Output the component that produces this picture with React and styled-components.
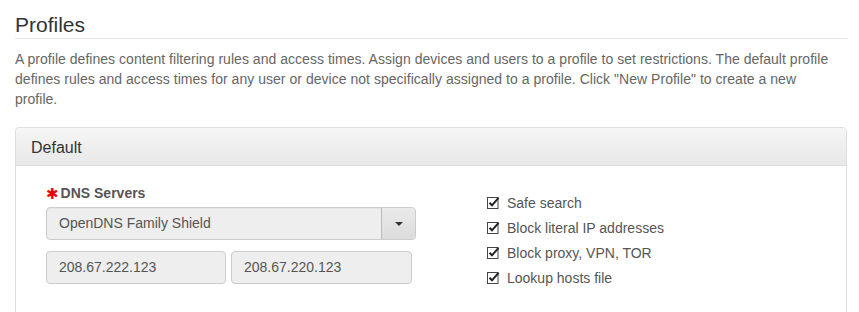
import styled, { createGlobalStyle } from "styled-components";

const Global = createGlobalStyle`
  body {
    margin: 0;
    background: #fff;
    font-family: "Liberation Sans", Arial, sans-serif;
  }
`;

const Page = styled.div`
  height: 312px;
  overflow: hidden;
  padding: 0 12px 0 15px;
`;

const Title = styled.h1`
  margin: 13px 0 0;
  padding-bottom: 1px;
  font-size: 21px;
  line-height: 24px;
  font-weight: normal;
  color: #333;
  border-bottom: 1px solid #e5e5e5;
`;

const Intro = styled.p`
  margin: 10px 0 18px;
  font-size: 14px;
  line-height: 20px;
  letter-spacing: 0.03px;
  color: #666;
`;

const Panel = styled.div`
  border: 1px solid #ddd;
  border-radius: 4px;
  height: 220px;
`;

const PanelHead = styled.div`
  height: 28px;
  padding: 9px 15px 0;
  font-size: 16px;
  line-height: 22px;
  color: #333;
  background: linear-gradient(#f5f5f5, #e8e8e8);
  border-bottom: 1px solid #ddd;
  border-radius: 3px 3px 0 0;
`;

const PanelBody = styled.div`
  display: grid;
  grid-template-columns: 370px 1fr;
  column-gap: 71px;
  padding: 17px 30px 0;
`;

const Field = styled.div`
  display: flex;
  flex-direction: column;
`;

const Label = styled.label`
  display: flex;
  align-items: center;
  gap: 2px;
  margin-bottom: 4px;
  font-size: 14px;
  line-height: 20px;
  font-weight: bold;
  color: #555;
`;

const Star = styled.span`
  color: #e00;
  font-family: "DejaVu Sans", sans-serif;
  font-size: 15px;
  line-height: 20px;
  position: relative;
  top: 1px;
`;

const Select = styled.div`
  display: flex;
  height: 31px;
  border: 1px solid #ccc;
  border-radius: 4px;
  background: #eee;
  box-shadow: inset 0 1px 1px rgba(0, 0, 0, 0.04);
`;

const SelectValue = styled.div`
  flex: 1;
  padding: 0 12px;
  font-size: 14px;
  line-height: 31px;
  color: #555;
`;

const Caret = styled.div`
  width: 33px;
  display: flex;
  align-items: center;
  justify-content: center;
  border-left: 1px solid #bbb;
  border-radius: 0 3px 3px 0;
  background: linear-gradient(#eaeaea, #dcdcdc);

  &::after {
    content: "";
    border-top: 4px solid #333;
    border-left: 4px solid transparent;
    border-right: 4px solid transparent;
  }
`;

const Inputs = styled.div`
  display: grid;
  grid-template-columns: 180px 181px;
  gap: 5px;
  margin-top: 11px;
`;

const Input = styled.div`
  height: 31px;
  padding: 0 12px;
  border: 1px solid #ccc;
  border-radius: 4px;
  background: #eee;
  font-size: 14px;
  line-height: 31px;
  color: #555;
`;

const Checks = styled.div`
  margin-top: 7px;
  display: flex;
  flex-direction: column;
`;

const Check = styled.div`
  display: flex;
  align-items: center;
  gap: 7px;
  height: 25px;
  font-size: 14px;
  color: #555;
`;

const Box = () => (
  <svg width="13" height="13" viewBox="0 0 13 13">
    <rect x="0.5" y="1.5" width="10.5" height="11" fill="#fff" stroke="#444" />
    <path d="M2.5 6.8 L5 9.3 L11.5 1.8" fill="none" stroke="#222" strokeWidth="2" />
  </svg>
);

const options = [
  "Safe search",
  "Block literal IP addresses",
  "Block proxy, VPN, TOR",
  "Lookup hosts file",
];

export default function App() {
  return (
    <Page>
      <Global />
      <Title>Profiles</Title>
      <Intro>
        A profile defines content filtering rules and access times. Assign devices and users to a
        profile to set restrictions. The default profile defines rules and access times for any user
        or device not specifically assigned to a profile. Click "New Profile" to create a new
        <br />
        profile.
      </Intro>
      <Panel>
        <PanelHead>Default</PanelHead>
        <PanelBody>
          <Field>
            <Label>
              <Star>✱</Star>DNS Servers
            </Label>
            <Select>
              <SelectValue>OpenDNS Family Shield</SelectValue>
              <Caret />
            </Select>
            <Inputs>
              <Input>208.67.222.123</Input>
              <Input>208.67.220.123</Input>
            </Inputs>
          </Field>
          <Checks>
            {options.map((o) => (
              <Check key={o}>
                <Box />
                {o}
              </Check>
            ))}
          </Checks>
        </PanelBody>
      </Panel>
    </Page>
  );
}
